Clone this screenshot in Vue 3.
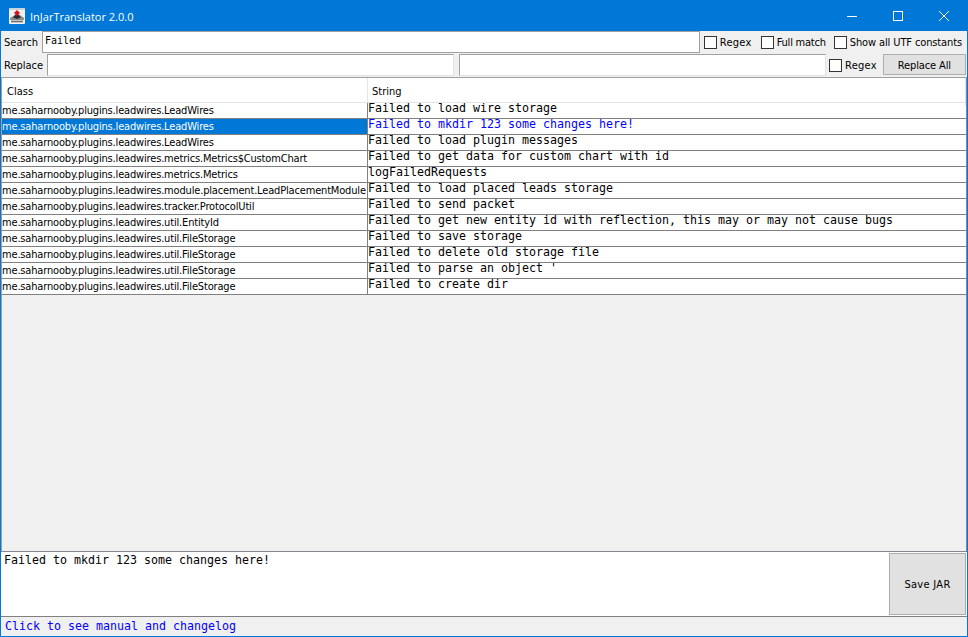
<template>
  <div class="window">
    <div class="titlebar">
      <svg class="app-icon" viewBox="0 0 16 16" width="16" height="16">
        <rect x="0" y="0" width="16" height="16" rx="1" fill="#f2f2f2" />
        <path d="M0 0 H16 V2 H0 Z" fill="#c9d3de" />
        <path d="M1 10 L6 7 L11 7 L15 10 L15 12 L1 12 Z" fill="#8d8d8d" />
        <path d="M2 12 H14 V15 H2 Z" fill="#c4c4c4" />
        <path d="M2 13.5 H14" stroke="#6e6e6e" />
        <path d="M4 9.5 L8 5 L12 9.5 L8 11 Z" fill="#2b2b30" />
        <path d="M8 2 L11 5 L8 8 L5 5 Z" fill="#d3121c" />
      </svg>
      <span class="title">InJarTranslator 2.0.0</span>
      <div class="win-buttons">
        <svg width="46" height="30" viewBox="0 0 46 30"><path d="M18 15.5 H28" stroke="#fff" /></svg>
        <svg width="46" height="30" viewBox="0 0 46 30"><rect x="18.5" y="10.5" width="9" height="9" fill="none" stroke="#fff" /></svg>
        <svg width="46" height="30" viewBox="0 0 46 30"><path d="M18 10 L28 20 M28 10 L18 20" stroke="#fff" /></svg>
      </div>
    </div>

    <div class="form-row">
      <label class="field-label search-label">Search</label>
      <div class="input mono search-input">Failed</div>
      <div class="checks">
        <label class="check regex"><i></i>Regex</label>
        <label class="check full"><i></i>Full match</label>
        <label class="check"><i></i>Show all UTF constants</label>
      </div>
    </div>

    <div class="form-row">
      <label class="field-label replace-label">Replace</label>
      <div class="input replace-from"></div>
      <div class="input replace-to"></div>
      <label class="check regex replace-check"><i></i>Regex</label>
      <button class="btn replace-btn">Replace All</button>
    </div>

    <div class="table-area">
      <div class="table-head">
        <div class="head-cell">Class</div>
        <div class="head-cell">String</div>
      </div>
      <div
        v-for="(row, i) in rows"
        :key="i"
        class="table-row"
        :class="{ selected: i === selectedIndex }"
      >
        <div class="cell class-col">{{ row.cls }}</div>
        <div class="cell mono str-col">{{ row.str }}</div>
      </div>
    </div>

    <div class="editor">
      <div class="editor-text mono">{{ rows[selectedIndex].str }}</div>
      <button class="btn save-btn">Save JAR</button>
    </div>

    <div class="status mono">Click to see manual and changelog</div>
  </div>
</template>

<script setup>
const selectedIndex = 1

const base = 'me.saharnooby.plugins.leadwires.'

const rows = [
  { cls: base + 'LeadWires', str: 'Failed to load wire storage' },
  { cls: base + 'LeadWires', str: 'Failed to mkdir 123 some changes here!' },
  { cls: base + 'LeadWires', str: 'Failed to load plugin messages' },
  { cls: base + 'metrics.Metrics$CustomChart', str: 'Failed to get data for custom chart with id' },
  { cls: base + 'metrics.Metrics', str: 'logFailedRequests' },
  { cls: base + 'module.placement.LeadPlacementModule', str: 'Failed to load placed leads storage' },
  { cls: base + 'tracker.ProtocolUtil', str: 'Failed to send packet' },
  { cls: base + 'util.EntityId', str: 'Failed to get new entity id with reflection, this may or may not cause bugs' },
  { cls: base + 'util.FileStorage', str: 'Failed to save storage' },
  { cls: base + 'util.FileStorage', str: 'Failed to delete old storage file' },
  { cls: base + 'util.FileStorage', str: "Failed to parse an object '" },
  { cls: base + 'util.FileStorage', str: 'Failed to create dir' },
]
</script>

<style>
html, body {
  margin: 0;
  overflow: hidden;
}
</style>

<style scoped>
.window {
  width: 968px;
  height: 637px;
  box-sizing: border-box;
  border: 1px solid #0078d7;
  background: #f0f0f0;
  display: flex;
  flex-direction: column;
  font-family: "DejaVu Sans Condensed", "DejaVu Sans", sans-serif;
  font-stretch: condensed;
  font-size: 11px;
  color: #000;
  overflow: hidden;
}

.mono {
  font-family: "DejaVu Sans Mono", monospace;
  font-stretch: normal;
  font-size: 11.63px;
}

.titlebar {
  height: 30px;
  flex: none;
  background: #0078d7;
  color: #fff;
  display: flex;
  align-items: center;
  padding-left: 8px;
}

.app-icon {
  margin-right: 5px;
}

.title {
  font-family: "Open Sans", sans-serif;
  font-stretch: normal;
  font-size: 11px;
}

.win-buttons {
  margin-left: auto;
  display: flex;
}

.form-row {
  height: 23px;
  flex: none;
  display: flex;
  align-items: stretch;
}

.field-label {
  padding-left: 3px;
  line-height: 23px;
  box-sizing: border-box;
}

.search-label {
  width: 41px;
}

.replace-label {
  width: 46px;
}

.input {
  background: #fff;
  box-sizing: border-box;
  height: 22px;
  border-top: 1px solid #a0a0a0;
  border-left: 1px solid #a0a0a0;
  border-right: 1px solid #e3e3e3;
  border-bottom: 1px solid #e3e3e3;
  padding-left: 2px;
}

.search-input {
  flex: 1;
  font-size: 10px;
  line-height: 17px;
  border-right-color: #a0a0a0;
  border-bottom-color: #a0a0a0;
}

.replace-from {
  width: 407px;
}

.replace-to {
  width: 367px;
  margin-left: 5px;
}

.checks {
  display: flex;
  gap: 8px;
  padding: 0 5px 0 4px;
}

.check {
  display: flex;
  align-items: center;
  white-space: nowrap;
  padding-bottom: 1px;
  letter-spacing: -0.12px;
}

.check i {
  width: 11px;
  height: 11px;
  border: 1px solid #333;
  background: #fff;
  margin-right: 3px;
  flex: none;
}

.regex {
  letter-spacing: 0.28px;
  margin-right: 1px;
}

.full {
  letter-spacing: -0.22px;
}

.replace-check {
  margin-left: 3px;
  margin-right: 0;
}

.btn {
  font: inherit;
  font-stretch: condensed;
  color: #000;
  background: #e1e1e1;
  border: 1px solid #adadad;
  padding: 0;
}

.replace-btn {
  width: 83px;
  height: 21px;
  margin-left: 6px;
  padding-top: 1px;
  letter-spacing: -0.12px;
}

.table-area {
  flex: 1;
  min-height: 0;
  border: 1px solid #a0a0a0;
  border-bottom-color: #828790;
  border-right-color: #828790;
  box-sizing: border-box;
}

.table-head {
  height: 25px;
  display: grid;
  grid-template-columns: 366px 1fr;
  background: #fff;
  border-bottom: 1px solid #e5e5e5;
  box-sizing: border-box;
}

.head-cell {
  padding-left: 5px;
  line-height: 28px;
  border-right: 1px solid #e5e5e5;
}

.head-cell + .head-cell {
  padding-left: 4px;
}

.table-row {
  height: 16px;
  box-sizing: border-box;
  display: grid;
  grid-template-columns: 366px 1fr;
  background: #fff;
  border-bottom: 1px solid #808080;
}

.cell {
  white-space: nowrap;
}

.class-col {
  line-height: 16px;
  letter-spacing: -0.17px;
  border-right: 1px solid #808080;
  overflow: hidden;
}

/* the string text sits a bit higher than the class text */
.str-col {
  line-height: 14px;
  margin-top: -2px;
}

.selected .class-col {
  background: #0078d7;
  color: #fff;
}

.selected .str-col {
  color: #0000ff;
}

.editor {
  height: 65px;
  flex: none;
  display: flex;
  background: #fff;
  border-bottom: 1px solid #808080;
  box-sizing: border-box;
}

.editor-text {
  flex: 1;
  padding: 1px 0 0 3px;
}

.save-btn {
  width: 77px;
  height: 62px;
  margin: 1px 1px 0 0;
  letter-spacing: 0.3px;
}

.status {
  height: 19px;
  flex: none;
  padding-left: 4px;
  line-height: 18px;
  color: #0000ff;
}
</style>
